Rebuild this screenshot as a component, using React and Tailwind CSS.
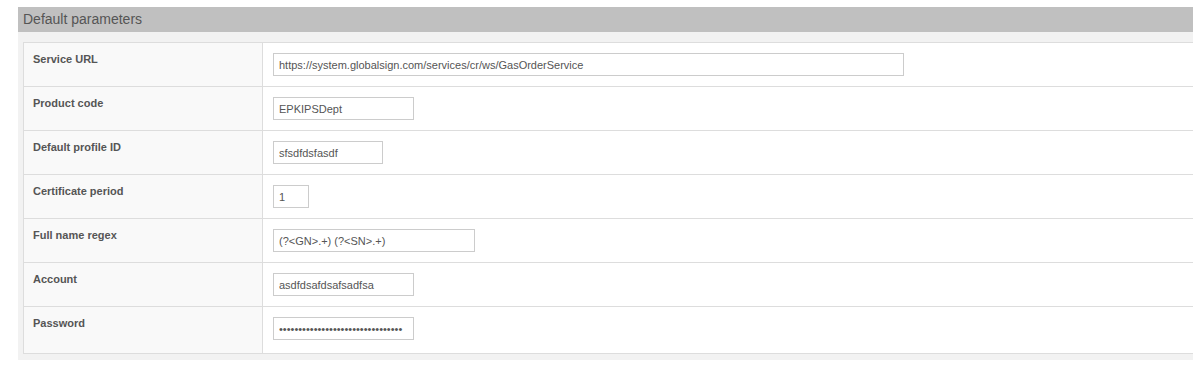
import React from "react";

const rows = [
  { label: "Service URL", value: "https://system.globalsign.com/services/cr/ws/GasOrderService", w: "w-[631px]" },
  { label: "Product code", value: "EPKIPSDept", w: "w-[141px]" },
  { label: "Default profile ID", value: "sfsdfdsfasdf", w: "w-[110px]" },
  { label: "Certificate period", value: "1", w: "w-[36px]" },
  { label: "Full name regex", value: "(?<GN>.+) (?<SN>.+)", w: "w-[202px]" },
  { label: "Account", value: "asdfdsafdsafsadfsa", w: "w-[141px]" },
  { label: "Password", value: "sdfsadfsadfsadfsadfsadfsadfsadfs", w: "w-[141px]", type: "password" },
];

export default function App() {
  return (
    <div
      className="w-full overflow-hidden bg-white pt-[7px] pl-[18px] pb-[11px]"
      style={{ fontFamily: '"Liberation Sans", Arial, sans-serif' }}
    >
      <div className="h-[25px] bg-[#c0c0c0] pl-[5px] text-[14px] leading-[25px] text-[#555555]">
        Default parameters
      </div>
      <div className="overflow-hidden bg-[#f2f2f2] pl-[5px] pt-[10px] pb-[6px]">
        <div className="w-[1300px] border-t border-l border-b border-[#dddddd]">
          {rows.map((r, i) => (
            <div
              key={r.label}
              className={
                "flex " + (i > 0 ? "border-t border-[#dddddd]" : "")
              }
            >
              <div className="w-[239px] shrink-0 border-r border-[#dddddd] bg-[#f9f9f9] pl-[9px] pt-[10px] text-[11px] font-bold leading-[13px] text-[#555555]">
                {r.label}
              </div>
              <div
                className={
                  "flex-1 bg-white pl-[10px] pt-[10px] " +
                  (i === rows.length - 1 ? "pb-[13px]" : "pb-[10px]")
                }
              >
                <input
                  type={r.type || "text"}
                  defaultValue={r.value}
                  readOnly
                  className={
                    r.w +
                    " block h-[23px] border border-[#cccccc] bg-white px-[5px] text-[11px] text-[#555555] outline-none"
                  }
                  style={{ fontFamily: '"Liberation Sans", Arial, sans-serif' }}
                />
              </div>
            </div>
          ))}
        </div>
      </div>
    </div>
  );
}
